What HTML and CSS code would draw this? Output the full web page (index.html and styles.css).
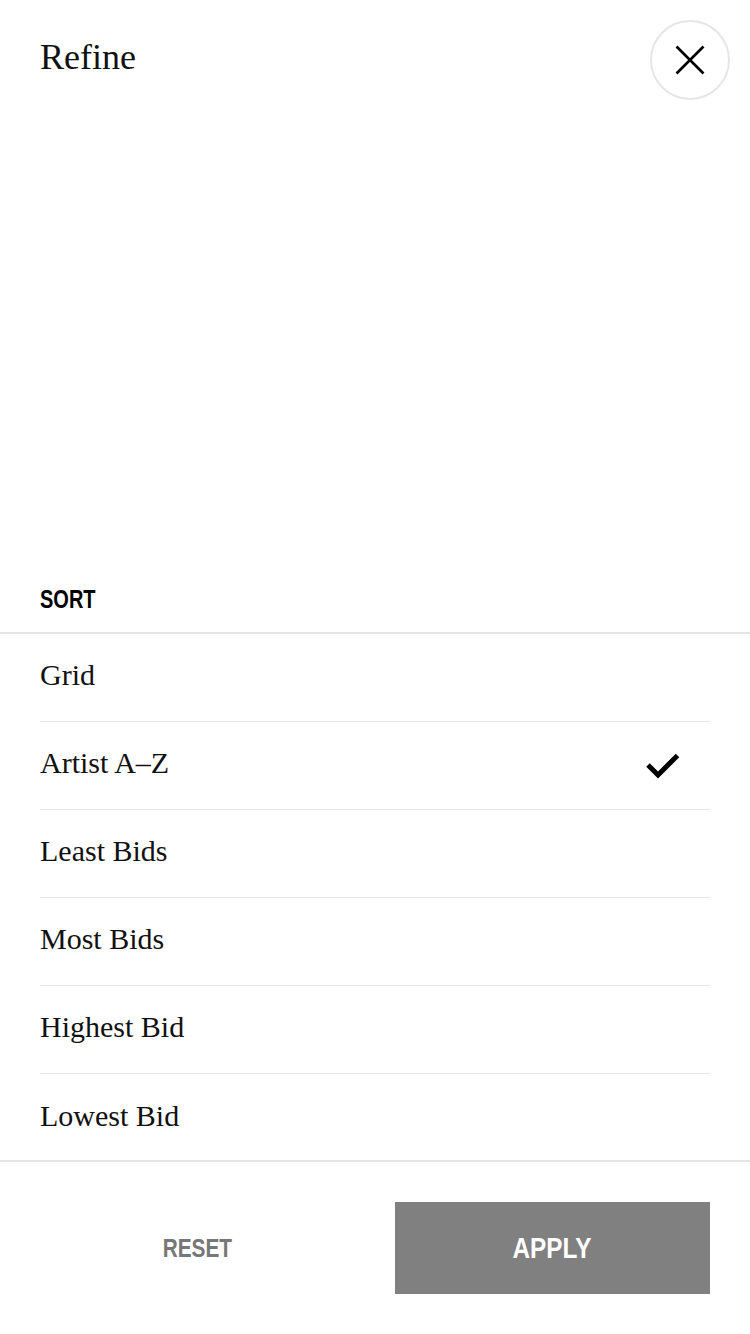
FILE: index.html
```html
<!DOCTYPE html>
<html lang="en">
<head>
<meta charset="utf-8">
<title>Refine</title>
<link rel="stylesheet" href="styles.css">
</head>
<body>
<div class="sheet">
  <header class="header">
    <h1 class="title">Refine</h1>
    <button class="close" aria-label="Close">
      <svg width="30" height="30" viewBox="0 0 30 30"><path d="M1.5 1.5 L28.5 28.5 M28.5 1.5 L1.5 28.5" stroke="#000" stroke-width="2.6" fill="none"/></svg>
    </button>
  </header>
  <div class="spacer"></div>
  <h2 class="label"><span class="cond">SORT</span></h2>
  <ul class="list">
    <li class="row">Grid</li>
    <li class="row selected"><span>Artist A–Z</span>
      <svg class="check" width="34" height="28" viewBox="0 0 34 28"><polyline points="2,13 12,23 31.5,3.5" fill="none" stroke="#000" stroke-width="5"/></svg>
    </li>
    <li class="row">Least Bids</li>
    <li class="row">Most Bids</li>
    <li class="row">Highest Bid</li>
    <li class="row last">Lowest Bid</li>
  </ul>
  <footer class="footer">
    <button class="btn reset"><span class="cond mid">RESET</span></button>
    <button class="btn apply"><span class="cond mid wide">APPLY</span></button>
  </footer>
</div>
</body>
</html>
```
FILE: styles.css
```css
html, body {
  margin: 0;
  padding: 0;
  background: #fff;
}
.sheet {
  width: 750px;
  height: 1334px;
  display: flex;
  flex-direction: column;
}
.header {
  display: flex;
  justify-content: space-between;
  align-items: flex-start;
  padding: 20px 20px 0 40px;
  height: 100px;
}
.title {
  margin: 19px 0 0;
  font-family: "Liberation Serif", "Times New Roman", serif;
  font-weight: normal;
  font-size: 36px;
  line-height: 36px;
  color: #111;
}
.close {
  width: 80px;
  height: 80px;
  border: 2px solid #e6e6e6;
  border-radius: 50%;
  background: #fff;
  padding: 0;
  display: flex;
  align-items: center;
  justify-content: center;
}
.spacer {
  flex: 1;
}
.cond {
  display: inline-block;
  transform: scaleX(0.8);
  transform-origin: left center;
}
.cond.mid {
  transform-origin: center center;
}
.cond.wide {
  transform: scaleX(0.84);
}
.label {
  margin: 0 0 21px 40px;
  font-family: "Liberation Sans", Arial, sans-serif;
  font-weight: bold;
  font-size: 25px;
  line-height: 24px;
  color: #000;
}
.list {
  list-style: none;
  margin: 0;
  padding: 0;
  border-top: 2px solid #e5e5e5;
  border-bottom: 2px solid #e5e5e5;
}
.row {
  margin: 0 40px;
  height: 88px;
  box-sizing: border-box;
  padding: 0 30px 5px 0;
  border-bottom: 1px solid #e5e5e5;
  display: flex;
  align-items: center;
  justify-content: space-between;
  font-family: "Liberation Serif", "Times New Roman", serif;
  font-size: 30px;
  line-height: 30px;
  color: #111;
}
.row.last {
  border-bottom: none;
  height: 86px;
  padding-bottom: 3px;
}
.check {
  display: block;
  margin-top: 5px;
}
.footer {
  display: flex;
  gap: 40px;
  padding: 40px 40px 40px;
}
.btn {
  flex: 1;
  height: 92px;
  border: none;
  padding: 0;
  font-family: "Liberation Sans", Arial, sans-serif;
  font-weight: bold;
}
.reset {
  background: #fff;
  color: #777;
  font-size: 26px;
}
.apply {
  background: #808080;
  color: #fff;
  font-size: 29px;
}
```
